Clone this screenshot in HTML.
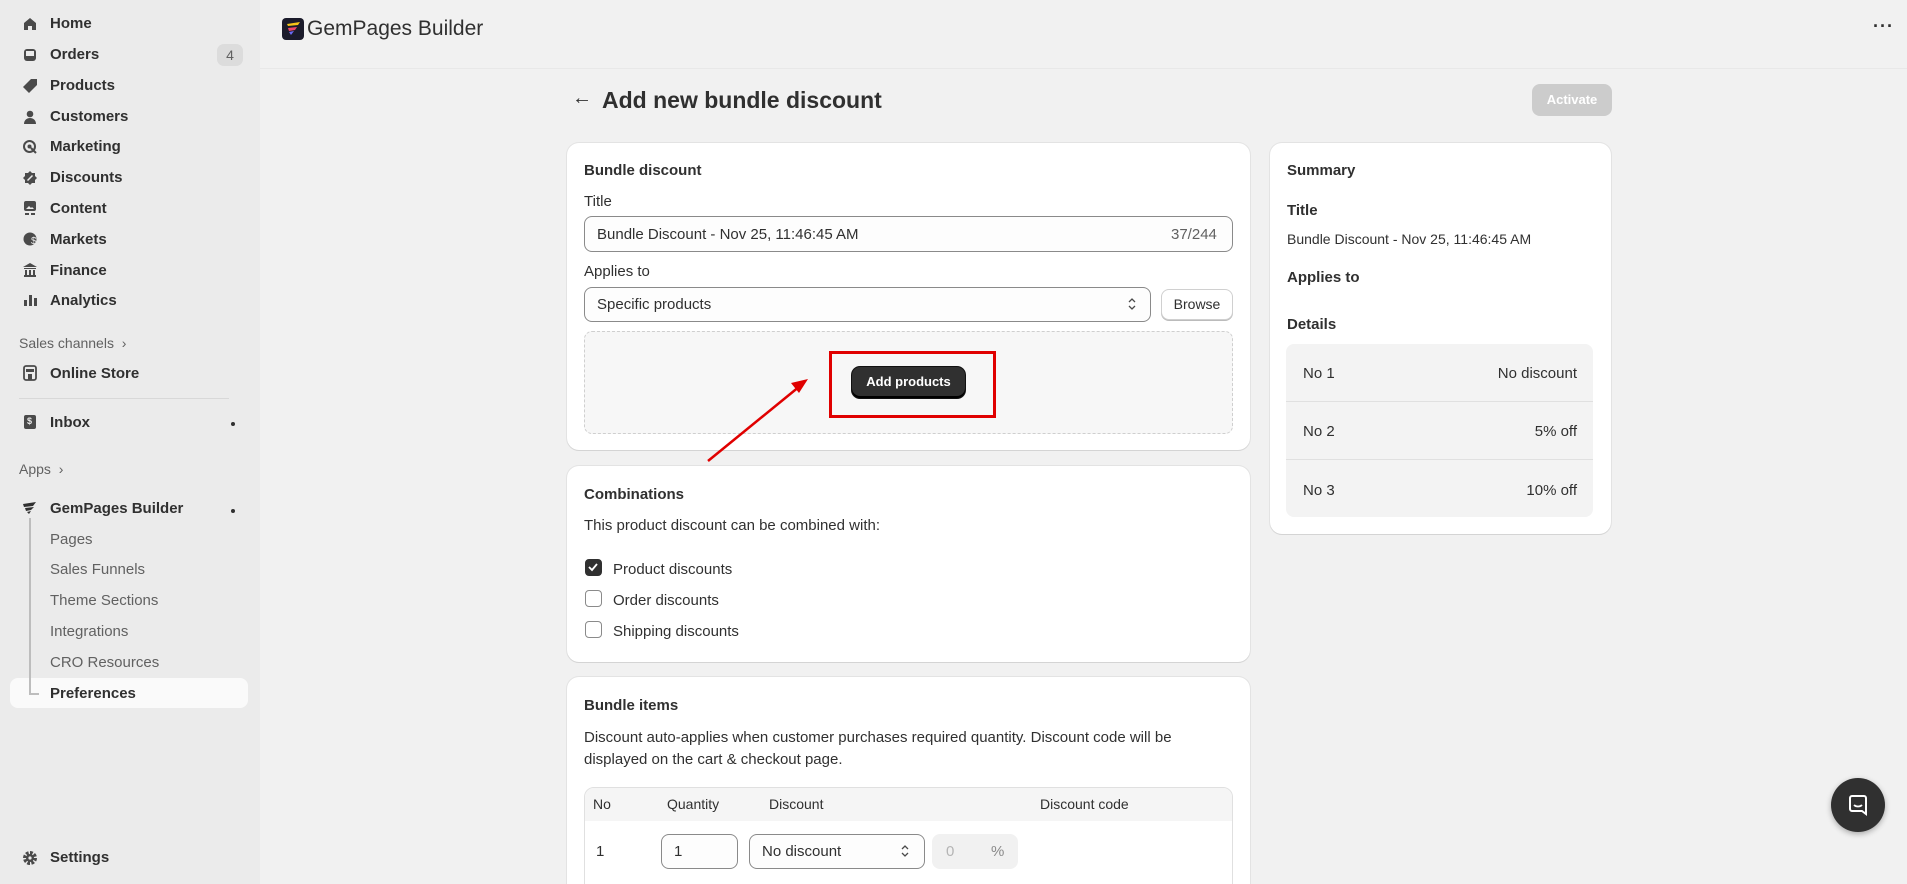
<!DOCTYPE html>
<html style="overflow:hidden;height:884px"><head><meta charset="utf-8"><style>
*{box-sizing:border-box;margin:0;padding:0}
body{width:1907px;height:884px;overflow:hidden;background:#f1f1f1;font-family:"Liberation Sans",sans-serif;color:#303030;position:relative;font-size:15px}
.a{position:absolute;white-space:nowrap}
#side{position:absolute;left:0;top:0;width:260px;height:884px;background:#ebebeb}
.nav{position:absolute;left:50px;font-size:15px;font-weight:bold;color:#303030}
.ic{position:absolute;left:22px;width:16px;height:16px}
.sub{position:absolute;left:50px;font-size:15px;color:#616161}
.card{position:absolute;background:#fff;border-radius:12px;box-shadow:0 1px 0 #d4d4d4,0 0 0 1px #e3e3e3}
.h{font-weight:bold;font-size:15px}
.inp{position:absolute;border:1px solid #8a8a8a;border-radius:8px;background:#fdfdfd}
.cb{position:absolute;left:585px;width:17px;height:17px;border:1.5px solid #8a8a8a;border-radius:4px;background:#fff}
</style></head><body>
<div id="side">
<svg class="ic" style="top:16px" viewBox="0 0 16 16"><path d="M2 7 8 2l6 5v7H10V10H6v4H2z" fill="#4a4a4a"/></svg>
<div class="nav" style="top:15px">Home</div>
<svg class="ic" style="top:47px" viewBox="0 0 16 16"><rect x="2" y="2" width="12" height="12" rx="3" fill="#4a4a4a"/><rect x="4" y="4" width="8" height="5" fill="#ebebeb"/></svg>
<div class="nav" style="top:46px">Orders</div>
<div class="a" style="left:217px;top:44px;width:26px;height:22px;background:#dcdcdc;border-radius:7px;text-align:center;line-height:22px;font-size:14px;color:#616161">4</div>
<svg class="ic" style="top:78px" viewBox="0 0 16 16"><path d="M9 1h6v6l-8 8-6-6z" fill="#4a4a4a"/></svg>
<div class="nav" style="top:77px">Products</div>
<svg class="ic" style="top:109px" viewBox="0 0 16 16"><circle cx="8" cy="5" r="3.3" fill="#4a4a4a"/><path d="M2 15c0-4 3-6 6-6s6 2 6 6z" fill="#4a4a4a"/></svg>
<div class="nav" style="top:108px">Customers</div>
<svg class="ic" style="top:139px" viewBox="0 0 16 16"><circle cx="7.5" cy="7.5" r="5.5" fill="none" stroke="#4a4a4a" stroke-width="2"/><circle cx="7.5" cy="7.5" r="2" fill="#4a4a4a"/><path d="M9 9l5 5" stroke="#4a4a4a" stroke-width="2"/></svg>
<div class="nav" style="top:138px">Marketing</div>
<svg class="ic" style="top:170px" viewBox="0 0 16 16"><path d="M8 1l2 2h3v3l2 2-2 2v3h-3l-2 2-2-2H3v-3L1 8l2-2V3h3z" fill="#4a4a4a"/><path d="M5.5 10.5l5-5" stroke="#ebebeb" stroke-width="1.5"/></svg>
<div class="nav" style="top:169px">Discounts</div>
<svg class="ic" style="top:200px" viewBox="0 0 16 16"><rect x="2" y="1" width="12" height="10" rx="2" fill="#4a4a4a"/><path d="M4 9l3-3 2 2 1-1 2 2z" fill="#ebebeb"/><rect x="3" y="13" width="4" height="2" fill="#4a4a4a"/><rect x="9" y="13" width="4" height="2" fill="#4a4a4a"/></svg>
<div class="nav" style="top:200px">Content</div>
<svg class="ic" style="top:231px" viewBox="0 0 16 16"><circle cx="8" cy="8" r="6.5" fill="#4a4a4a"/><text x="9" y="13" font-size="10" fill="#ebebeb" font-family="Liberation Sans">$</text></svg>
<div class="nav" style="top:231px">Markets</div>
<svg class="ic" style="top:262px" viewBox="0 0 16 16"><path d="M8 1l7 4H1z M2 6h12v1H2z M2 13h12v2H2z" fill="#4a4a4a"/><path d="M3 8h2v5H3zM7 8h2v5H7zM11 8h2v5h-2z" fill="#4a4a4a"/></svg>
<div class="nav" style="top:262px">Finance</div>
<svg class="ic" style="top:292px" viewBox="0 0 16 16"><rect x="2" y="8" width="3" height="6" fill="#4a4a4a"/><rect x="7" y="3" width="3" height="11" fill="#4a4a4a"/><rect x="12" y="6" width="3" height="8" fill="#4a4a4a"/></svg>
<div class="nav" style="top:292px">Analytics</div>
<div class="a" style="left:19px;top:335px;font-size:14px;color:#616161">Sales channels &nbsp;›</div>
<svg class="ic" style="top:365px" viewBox="0 0 16 16"><rect x="2" y="1" width="12" height="14" rx="2" fill="none" stroke="#4a4a4a" stroke-width="1.8"/><path d="M4 4h8v3H4zM6 9h4v6H6z" fill="#4a4a4a"/></svg>
<div class="nav" style="top:365px">Online Store</div>
<div class="a" style="left:19px;top:398px;width:210px;height:1px;background:#d8d8d8"></div>
<svg class="ic" style="top:414px" viewBox="0 0 16 16"><rect x="2" y="1" width="12" height="14" rx="2" fill="#4a4a4a"/><text x="5" y="10" font-size="9" fill="#ebebeb" font-family="Liberation Sans" font-weight="bold">$</text></svg>
<div class="nav" style="top:414px">Inbox</div>
<div class="a" style="left:231px;top:422px;width:4px;height:4px;border-radius:2px;background:#303030"></div>
<div class="a" style="left:19px;top:461px;font-size:14px;color:#616161">Apps &nbsp;›</div>
<svg class="ic" style="top:501px;left:22px" viewBox="0 0 16 16"><path d="M1 3l13-2-3 4-9 1zM3 7l9-1-3 3-5 1zM5 11l4-1-2 3z" fill="#303030"/></svg>
<div class="a" style="left:29px;top:518px;width:1.5px;height:177px;background:#bdbdbd"></div>
<div class="nav" style="top:500px">GemPages Builder</div>
<div class="a" style="left:231px;top:509px;width:4px;height:4px;border-radius:2px;background:#303030"></div>
<div class="sub" style="top:531px">Pages</div>
<div class="sub" style="top:561px">Sales Funnels</div>
<div class="sub" style="top:592px">Theme Sections</div>
<div class="sub" style="top:623px">Integrations</div>
<div class="sub" style="top:654px">CRO Resources</div>
<div class="a" style="left:10px;top:678px;width:238px;height:30px;background:#fafafa;border-radius:8px"></div>
<div class="a" style="left:29px;top:677px;width:1.5px;height:17px;background:#bdbdbd"></div>
<div class="a" style="left:29px;top:693px;width:10px;height:1.5px;background:#bdbdbd"></div>
<div class="nav" style="top:685px">Preferences</div>
<svg class="ic" style="top:850px" viewBox="0 0 16 16"><circle cx="8" cy="8" r="5" fill="none" stroke="#4a4a4a" stroke-width="4" stroke-dasharray="2.6 1.3"/><circle cx="8" cy="8" r="4" fill="#4a4a4a"/><circle cx="8" cy="8" r="1.6" fill="#ebebeb"/></svg>
<div class="nav" style="top:849px">Settings</div>
</div>
<!-- header -->
<div class="a" style="left:260px;top:68px;width:1647px;height:1px;background:#e8e8e8"></div>
<svg class="a" style="left:282px;top:18px" width="22" height="22" viewBox="0 0 22 22"><rect width="22" height="22" rx="4" fill="#1b1b2b"/><path d="M5 6l13-2-2 3-10 1z" fill="#f5c518"/><path d="M6 10l9-1-2 3-6 1z" fill="#f0466b"/><path d="M7 14l5-1-3 4z" fill="#6b6bf5"/></svg>
<div class="a" style="left:307px;top:17px;font-size:21px;color:#303030">GemPages Builder</div>
<div class="a" style="left:1873px;top:16px;font-size:18px;font-weight:bold;color:#303030;letter-spacing:1px">···</div>
<!-- title -->
<div class="a" style="left:572px;top:87px;font-size:20px;color:#303030">←</div>
<div class="a" style="left:602px;top:87px;font-size:23px;font-weight:bold;color:#303030">Add new bundle discount</div>
<div class="a" style="left:1532px;top:84px;width:80px;height:32px;border-radius:8px;background:#cccccc;color:#fff;font-size:13px;font-weight:bold;text-align:center;line-height:32px">Activate</div>
<!-- card 1 -->
<div class="card" style="left:567px;top:143px;width:683px;height:307px"></div>
<div class="a h" style="left:584px;top:162px">Bundle discount</div>
<div class="a" style="left:584px;top:193px">Title</div>
<div class="inp" style="left:584px;top:216px;width:649px;height:36px"></div>
<div class="a" style="left:597px;top:226px">Bundle Discount - Nov 25, 11:46:45 AM</div>
<div class="a" style="left:1171px;top:226px;color:#616161">37/244</div>
<div class="a" style="left:584px;top:263px">Applies to</div>
<div class="inp" style="left:584px;top:287px;width:567px;height:35px"></div>
<div class="a" style="left:597px;top:296px">Specific products</div>
<svg class="a" style="left:1127px;top:296px" width="10" height="16" viewBox="0 0 10 16"><path d="M2 6l3-3 3 3M2 10l3 3 3-3" fill="none" stroke="#4a4a4a" stroke-width="1.3"/></svg>
<div class="a" style="left:1161px;top:289px;width:72px;height:31px;border-radius:8px;border:1px solid #d0d0d0;box-shadow:0 1px 0 #bbb;background:#fff;text-align:center;line-height:29px;font-size:14px">Browse</div>
<div class="a" style="left:584px;top:331px;width:649px;height:103px;border:1px dashed #cfcfcf;border-radius:8px;background:#f7f7f7"></div>
<div class="a" style="left:829px;top:351px;width:167px;height:67px;border:3px solid #e00000"></div>
<div class="a" style="left:852px;top:367px;width:113px;height:31px;border-radius:8px;background:#303030;box-shadow:inset 0 -2px 0 #000,0 0 0 1px #111;color:#fff;font-size:13px;font-weight:bold;text-align:center;line-height:30px">Add products</div>
<svg class="a" style="left:700px;top:375px" width="120" height="95" viewBox="0 0 120 95"><path d="M8 86L100 11" stroke="#e00000" stroke-width="2.5"/><path d="M108 4l-17 4 8 10z" fill="#e00000"/></svg>
<!-- card 2 -->
<div class="card" style="left:567px;top:466px;width:683px;height:196px"></div>
<div class="a h" style="left:584px;top:486px">Combinations</div>
<div class="a" style="left:584px;top:517px">This product discount can be combined with:</div>
<div class="cb" style="top:559px;background:#303030;border-color:#303030"><svg width="14" height="14" viewBox="0 0 14 14" style="display:block"><path d="M3 7l3 3 5-6" fill="none" stroke="#fff" stroke-width="1.8"/></svg></div>
<div class="a" style="left:613px;top:561px">Product discounts</div>
<div class="cb" style="top:590px"></div>
<div class="a" style="left:613px;top:592px">Order discounts</div>
<div class="cb" style="top:621px"></div>
<div class="a" style="left:613px;top:623px">Shipping discounts</div>
<!-- card 3 -->
<div class="card" style="left:567px;top:677px;width:683px;height:220px"></div>
<div class="a h" style="left:584px;top:697px">Bundle items</div>
<div class="a" style="left:584px;top:727px;line-height:22px;white-space:normal;width:640px">Discount auto-applies when customer purchases required quantity. Discount code will be displayed on the cart &amp; checkout page.</div>
<div class="a" style="left:584px;top:787px;width:649px;height:110px;border:1px solid #e0e0e0;border-radius:10px;background:#fff;overflow:hidden"><div style="height:33px;background:#f5f5f5"></div></div>
<div class="a" style="left:593px;top:796px;font-size:14px">No</div>
<div class="a" style="left:667px;top:796px;font-size:14px">Quantity</div>
<div class="a" style="left:769px;top:796px;font-size:14px">Discount</div>
<div class="a" style="left:1040px;top:796px;font-size:14px">Discount code</div>
<div class="a" style="left:596px;top:843px">1</div>
<div class="inp" style="left:661px;top:834px;width:77px;height:35px"></div>
<div class="a" style="left:674px;top:843px">1</div>
<div class="inp" style="left:749px;top:834px;width:176px;height:35px"></div>
<div class="a" style="left:762px;top:843px">No discount</div>
<svg class="a" style="left:900px;top:843px" width="10" height="16" viewBox="0 0 10 16"><path d="M2 6l3-3 3 3M2 10l3 3 3-3" fill="none" stroke="#4a4a4a" stroke-width="1.3"/></svg>
<div class="a" style="left:932px;top:834px;width:86px;height:35px;border-radius:8px;background:#f1f1f1"></div>
<div class="a" style="left:946px;top:843px;color:#b5b5b5">0</div>
<div class="a" style="left:991px;top:843px;color:#8a8a8a">%</div>
<!-- summary -->
<div class="card" style="left:1270px;top:143px;width:341px;height:391px"></div>
<div class="a h" style="left:1287px;top:162px">Summary</div>
<div class="a h" style="left:1287px;top:202px">Title</div>
<div class="a" style="left:1287px;top:231px;font-size:14px">Bundle Discount - Nov 25, 11:46:45 AM</div>
<div class="a h" style="left:1287px;top:269px">Applies to</div>
<div class="a h" style="left:1287px;top:316px">Details</div>
<div class="a" style="left:1286px;top:344px;width:307px;height:173px;background:#f3f3f3;border-radius:8px"></div>
<div class="a" style="left:1286px;top:401px;width:307px;height:1px;background:#e0e0e0"></div>
<div class="a" style="left:1286px;top:459px;width:307px;height:1px;background:#e0e0e0"></div>
<div class="a" style="left:1303px;top:365px">No 1</div><div class="a" style="right:330px;top:365px">No discount</div>
<div class="a" style="left:1303px;top:423px">No 2</div><div class="a" style="right:330px;top:423px">5% off</div>
<div class="a" style="left:1303px;top:482px">No 3</div><div class="a" style="right:330px;top:482px">10% off</div>
<!-- chat -->
<div class="a" style="left:1831px;top:778px;width:54px;height:54px;border-radius:27px;background:#303030;box-shadow:0 2px 6px rgba(0,0,0,.3)"></div>
<svg class="a" style="left:1846px;top:793px" width="24" height="24" viewBox="0 0 24 24"><path d="M4 5a2 2 0 012-2h12a2 2 0 012 2v16l-4-3H6a2 2 0 01-2-2z" fill="none" stroke="#fff" stroke-width="2"/><path d="M8 12c2 2 6 2 8 0" fill="none" stroke="#fff" stroke-width="1.8"/></svg>
</body></html>
